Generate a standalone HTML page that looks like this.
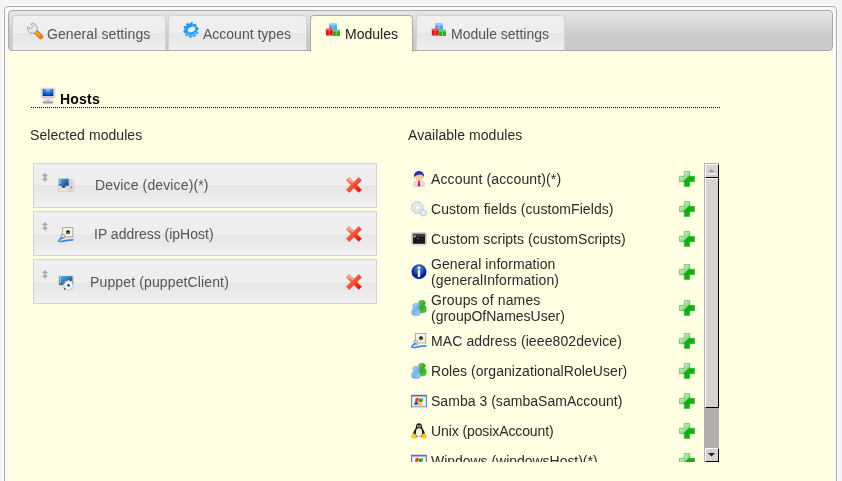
<!DOCTYPE html>
<html><head><meta charset="utf-8">
<style>
html,body{margin:0;padding:0;}
body{width:842px;height:481px;overflow:hidden;position:relative;background:#f4f4f4;font-family:"Liberation Sans",sans-serif;font-size:14px;}
#wrap{position:absolute;left:0;top:0;width:842px;height:481px;will-change:transform;}
.a{position:absolute;}
#outer{left:4px;top:6px;width:831px;height:500px;border:1px solid #aaa;border-radius:4px;background:#fafafa;box-shadow:0 0 0 1px rgba(255,255,255,0.85);}
#content{left:8px;top:51px;width:825px;height:440px;background:#fffde2;}
#bar{left:8px;top:10px;width:823px;height:39px;border:1px solid #aaa;border-radius:4px;background:linear-gradient(#e6e6e6 0,#d6d6d6 14px,#cacaca 26px,#c9c9c9 39px);}
.tab{top:15px;height:34px;border:1px solid #d3d3d3;border-bottom:0;border-radius:4px 4px 0 0;
 background:linear-gradient(#efefef 0,#eeeeee 17px,#e6e6e6 17px,#e9e9e9 25px,#efefef 34px);color:#555;}
.tab.act{height:36px;border-color:#aaa;background:#fffde2;color:#212121;}
.tl{position:absolute;top:10px;line-height:16px;white-space:nowrap;}
.ic{position:absolute;width:16px;height:16px;overflow:visible;}
#h{left:31px;top:91px;width:690px;height:16px;}
#dots{left:31px;top:107px;width:690px;height:1px;background:linear-gradient(to right,#000 50%,transparent 50%) 0 0/2px 1px repeat-x;}
.ht{position:absolute;left:29px;top:0;font-weight:bold;color:#000;line-height:16px;letter-spacing:0.2px;}
.lbl{color:#2a2a2a;line-height:16px;}
.box{left:33px;width:342px;height:43px;border:1px solid #d3d3d3;
 background:linear-gradient(#efefef 0,#eeeeee 21px,#e6e6e6 21px,#e9e9e9 30px,#f1f1f1 43px);color:#555;}
.bt{position:absolute;top:13px;line-height:16px;white-space:nowrap;}
#list{left:408px;top:163px;width:312px;height:299px;overflow:hidden;}
.row{position:absolute;left:0;width:296px;color:#2a2a2a;}
.rt{position:absolute;left:23px;line-height:16px;white-space:nowrap;}
#sb{left:704px;top:163px;width:15px;height:299px;background:#b5afab;}
.sbtn{position:absolute;left:1px;width:12px;height:12px;background:#d6d2ce;border-top:1px solid #fff;border-left:1px solid #fff;border-right:1px solid #000;border-bottom:1px solid #000;}
</style></head>
<body>
<div id="wrap">

<svg width="0" height="0" style="position:absolute">
<defs>
 <linearGradient id="gPlus" x1="0" y1="0" x2="1" y2="1"><stop offset="0" stop-color="#e4f8e0"/><stop offset="0.42" stop-color="#98dc90"/><stop offset="0.5" stop-color="#14a814"/><stop offset="1" stop-color="#04c404"/></linearGradient>
 <linearGradient id="gX" x1="0" y1="0" x2="1" y2="1"><stop offset="0" stop-color="#ffb0a0"/><stop offset="0.45" stop-color="#f45a3a"/><stop offset="1" stop-color="#e80000"/></linearGradient>
 <linearGradient id="gX2" gradientUnits="userSpaceOnUse" x1="2" y1="2" x2="14" y2="14"><stop offset="0" stop-color="#ff9c84"/><stop offset="0.45" stop-color="#f85838"/><stop offset="1" stop-color="#ea0a0a"/></linearGradient>
 <linearGradient id="gScreen" x1="0" y1="0" x2="0" y2="1"><stop offset="0" stop-color="#80c0f4"/><stop offset="0.5" stop-color="#2a70d8"/><stop offset="1" stop-color="#0a3cb0"/></linearGradient>
 <radialGradient id="gHost" cx="0.5" cy="0.1" r="0.8"><stop offset="0" stop-color="#9cd0f8"/><stop offset="0.5" stop-color="#2a74d8"/><stop offset="1" stop-color="#0838a8"/></radialGradient>
 <linearGradient id="gScreen2" x1="0" y1="0" x2="1" y2="1"><stop offset="0" stop-color="#58b0e0"/><stop offset="1" stop-color="#103c88"/></linearGradient>
 <radialGradient id="gInfo" cx="0.5" cy="0.3" r="0.7"><stop offset="0" stop-color="#7090e0"/><stop offset="0.55" stop-color="#1838b0"/><stop offset="0.8" stop-color="#08187a"/><stop offset="1" stop-color="#3060d0"/></radialGradient>
 <linearGradient id="gBlueP" x1="0" y1="0" x2="1" y2="1"><stop offset="0" stop-color="#c0e0fc"/><stop offset="0.5" stop-color="#78b4ec"/><stop offset="1" stop-color="#a8d0f8"/></linearGradient>
 <linearGradient id="gGreenP" x1="0" y1="0" x2="1" y2="1"><stop offset="0" stop-color="#70d860"/><stop offset="0.5" stop-color="#30b020"/><stop offset="1" stop-color="#58d040"/></linearGradient>
 <symbol id="iPlus" viewBox="0 0 16 16"><path d="M5.3 0.4h5.4v4.9h4.9v5.4h-4.9v4.9h-5.4v-4.9h-4.9v-5.4h4.9z" fill="url(#gPlus)" stroke="#30a030" stroke-width="0.5"/></symbol>
 <symbol id="iX" viewBox="0 0 16 16"><path d="M3.26 0.43 L8.00 5.17 L12.74 0.43 L15.57 3.26 L10.83 8.00 L15.57 12.74 L12.74 15.57 L8.00 10.83 L3.26 15.57 L0.43 12.74 L5.17 8.00 L0.43 3.26z" fill="url(#gX2)" stroke="#e03818" stroke-width="0.5" stroke-linejoin="round"/><path d="M3.3 1.6L7 5.3" stroke="#ffd0c0" stroke-width="1.2" stroke-linecap="round" opacity="0.8"/></symbol>
 <symbol id="iWin" viewBox="0 0 16 16"><rect x="0.5" y="2.2" width="15" height="11.6" fill="#f8f8fc" stroke="#6878a8" stroke-width="0.9"/><rect x="0.5" y="2.2" width="15" height="1.5" fill="#5868a0"/><rect x="1.4" y="3.8" width="13.2" height="9.1" fill="none" stroke="#c8d4ec" stroke-width="0.6"/><path d="M4.6 5.2c1.1-.7 2.3-.7 3.4 0l-.6 3.3c-1.1-.6-2.3-.6-3.4 0z" fill="#f04418"/><path d="M8.3 5.3c1.1.6 2.3.6 3.9-.2l-.7 3.4c-1.5.7-2.7.7-3.8 0z" fill="#28a828"/><path d="M3.8 8.8c1.1-.7 2.3-.7 3.4 0l-.6 3.3c-1.1-.6-2.3-.6-3.4 0z" fill="#1c50e8"/><path d="M7.5 8.9c1.1.6 2.3.6 3.9-.2l-.7 3.4c-1.5.7-2.7.7-3.8 0z" fill="#f8d008"/></symbol>
 <symbol id="iGroup" viewBox="0 0 16 16"><path d="M11 0.2c1.9 0 3.3 1 3.3 2.5c0 1-.6 1.8-1.4 2.3c1.5.5 2.2 1.6 2.2 3.2v2.6c0 1.2-1.6 2-4.1 2s-4.1-.8-4.1-2v-2.6c0-1.6.7-2.7 2.2-3.2c-.8-.5-1.4-1.3-1.4-2.3c0-1.5 1.4-2.5 3.3-2.5z" fill="url(#gGreenP)" stroke="#1a8a10" stroke-width="0.5"/><path d="M5 3.2c2 0 3.4 1.1 3.4 2.7c0 1-.6 1.9-1.5 2.4c1.6.5 2.4 1.7 2.4 3.4v2c0 1.2-1.8 1.9-4.3 1.9s-4.3-.7-4.3-1.9v-2c0-1.7.8-2.9 2.4-3.4c-.9-.5-1.5-1.4-1.5-2.4c0-1.6 1.4-2.7 3.4-2.7z" fill="url(#gBlueP)" stroke="#6898d8" stroke-width="0.5"/></symbol>
 <symbol id="iNet" viewBox="0 0 16 16"><rect x="4.6" y="0.5" width="10.2" height="9.4" fill="#f2f2f2" stroke="#9a9a9a" stroke-width="0.8"/><circle cx="10" cy="5.2" r="2" fill="#1a1a1a"/><rect x="8" y="5.3" width="4" height="1.6" fill="#8a7a10"/><path d="M3 7.6h3.6l.4 3.8h-4.4z" fill="#dcdcdc" stroke="#8a8a8a" stroke-width="0.6"/><path d="M4.6 10.6c-2.5 1-4.5 2.8-3.3 3.7c2 1 6-1 10-1.2c1.5 0 2.8-.2 3.5-.3" fill="none" stroke="#4a82d4" stroke-width="1.7" stroke-linecap="round"/></symbol>
 <symbol id="iArr" viewBox="0 0 8 10"><path d="M4 0L7.4 3.3H5V5.5H7.4L4 8.8L0.6 5.5H3V3.3H0.6z" fill="#aeaeae"/></symbol>
 <symbol id="iCubes" viewBox="0 0 16 16"><rect x="4" y="1.5" width="8" height="6.5" rx="0.6" fill="#52a8f4"/><rect x="4" y="1.5" width="8" height="2" rx="0.6" fill="#90ccf8"/><rect x="0.8" y="6.8" width="7" height="6.8" rx="0.6" fill="#e01414"/><rect x="0.8" y="6.8" width="7" height="1.8" rx="0.6" fill="#f06060"/><rect x="7.8" y="7.8" width="7.2" height="6.3" rx="0.6" fill="#22b422"/><rect x="7.8" y="7.8" width="7.2" height="1.8" rx="0.6" fill="#6cd86c"/><path d="M8 2.5v5M4.3 8v5.3M11.4 9v4.8" stroke="#f0f4f4" stroke-width="0.5" opacity="0.7"/></symbol>
</defs>
</svg>
<div id="outer" class="a"></div>
<div id="content" class="a"></div>
<div id="bar" class="a"></div>
<div class="a tab" style="left:12px;width:152px;"><svg class="ic" style="left:14px;top:7px" viewBox="0 0 16 16"><path d="M8.6 8.6L13.9 13.9" stroke="#b85400" stroke-width="4.4" stroke-linecap="round"/><path d="M8.6 8.6L13.9 13.9" stroke="#ffa418" stroke-width="3" stroke-linecap="round"/><circle cx="13.4" cy="13.4" r="1.1" fill="#ff6800"/><path d="M0.9 3.6L3.4 6.1L6.1 3.4L3.6 0.9A4.9 4.9 0 1 1 0.9 3.6z" fill="#e6e6f0" stroke="#8a8aaa" stroke-width="0.8"/></svg><span class="tl" style="left:34px;"><span style="letter-spacing:0.09px">General settings</span></span></div>
<div class="a tab" style="left:168px;width:137px;"><svg class="ic" style="left:14px;top:6px" viewBox="0 0 16 16"><path d="M13.88 9.19 L15.08 10.15 L14.44 11.64 L12.92 11.43 L12.06 12.42 L12.47 13.90 L11.07 14.73 L9.97 13.67 L8.68 13.96 L8.15 15.40 L6.53 15.25 L6.26 13.74 L5.05 13.22 L3.77 14.07 L2.55 13.00 L3.22 11.62 L2.54 10.49 L1.01 10.43 L0.65 8.84 L2.00 8.12 L2.12 6.81 L0.92 5.85 L1.56 4.36 L3.08 4.57 L3.94 3.58 L3.53 2.10 L4.93 1.27 L6.03 2.33 L7.32 2.04 L7.85 0.60 L9.47 0.75 L9.74 2.26 L10.95 2.78 L12.23 1.93 L13.45 3.00 L12.78 4.38 L13.46 5.51 L14.99 5.57 L15.35 7.16 L14.00 7.88z" fill="#1c8ef2" stroke="#1c8ef2" stroke-width="0.6" stroke-linejoin="round"/><circle cx="8" cy="8" r="5.8" fill="#2a9cf6"/><path d="M3.5 11.5A5.8 5.8 0 0 0 13.5 9" stroke="#60c8fc" stroke-width="1.2" fill="none"/><ellipse cx="8.6" cy="7.5" rx="3.9" ry="2.5" transform="rotate(-22 8.6 7.5)" fill="#d8ecfa"/><ellipse cx="8.4" cy="7.7" rx="3.3" ry="2" transform="rotate(-22 8.4 7.7)" fill="#f0f2f4"/></svg><span class="tl" style="left:34px;">Account types</span></div>
<div class="a tab act" style="left:310px;width:101px;"><svg class="ic" style="left:14px;top:6px" viewBox="0 0 16 16"><use href="#iCubes"/></svg><span class="tl" style="left:34px;">Modules</span></div>
<div class="a tab" style="left:416px;width:147px;"><svg class="ic" style="left:14px;top:6px" viewBox="0 0 16 16"><use href="#iCubes"/></svg><span class="tl" style="left:34px;">Module settings</span></div>
<div id="h" class="a"><svg class="ic" style="left:9px;top:-3px" viewBox="0 0 16 16"><rect x="1.2" y="0.2" width="13.6" height="9.2" rx="0.6" fill="#f0f0f0" stroke="#b4b4b4" stroke-width="0.6"/><rect x="2.6" y="1" width="10.8" height="7.2" fill="url(#gHost)"/><path d="M3.6 9.6h8.8l-.4 2.4h-8z" fill="#e8e8e8" stroke="#c0c0c0" stroke-width="0.5"/><rect x="6.8" y="12" width="2.4" height="1" fill="#b0b0b0"/><rect x="3" y="13" width="10" height="2.4" rx="0.6" fill="#9a9a9a"/><rect x="3.5" y="13.2" width="9" height="0.8" fill="#c8c8c8"/></svg><span class="ht">Hosts</span></div>
<div id="dots" class="a"></div>
<div class="a lbl" style="left:30px;top:127px;"><span style="letter-spacing:0.06px">Selected modules</span></div>
<div class="a lbl" style="left:408px;top:127px;"><span style="letter-spacing:0.06px">Available modules</span></div>
<div class="a box" style="top:163px;"><svg class="ic" style="left:7px;top:9px;width:8px;height:10px" viewBox="0 0 8 10"><use href="#iArr"/></svg><svg class="ic" style="left:24px;top:13px" viewBox="0 0 16 16"><rect x="0.2" y="1" width="11.2" height="8.3" fill="#efebe2" stroke="#d0ccc4" stroke-width="0.4"/><rect x="0.7" y="1.8" width="10" height="7" fill="url(#gScreen2)"/><rect x="1.5" y="3.3" width="1.4" height="1" fill="#e8f0f8"/><rect x="1.5" y="5.6" width="1.4" height="1" fill="#e8f0f8"/><ellipse cx="5.6" cy="10" rx="2" ry="0.9" fill="#111"/><rect x="0" y="10.8" width="11.4" height="4" fill="#e2e2e2" stroke="#c4c4c4" stroke-width="0.4"/><rect x="11.6" y="2.8" width="4" height="11.6" fill="#e6e6e6" stroke="#b0b0b0" stroke-width="0.4"/><rect x="12.6" y="3.5" width="1.2" height="10" fill="#c8c8c8"/><rect x="13.2" y="9.6" width="1" height="1.8" fill="#4a80d0"/></svg><span class="bt" style="left:61px;top:13px"><span style="letter-spacing:0.13px">Device (device)(*)</span></span><svg class="ic" style="left:312px;top:13px" viewBox="0 0 16 16"><use href="#iX"/></svg></div>
<div class="a box" style="top:211px;background:linear-gradient(#efefef 0,#eeeeee 22px,#e6e6e6 22px,#e9e9e9 31px,#f1f1f1 43px);"><svg class="ic" style="left:7px;top:10px;width:8px;height:10px" viewBox="0 0 8 10"><use href="#iArr"/></svg><svg class="ic" style="left:24px;top:15px" viewBox="0 0 16 16"><use href="#iNet"/></svg><span class="bt" style="left:60px;top:14px">IP address (ipHost)</span><svg class="ic" style="left:312px;top:14px" viewBox="0 0 16 16"><use href="#iX"/></svg></div>
<div class="a box" style="top:259px;background:linear-gradient(#efefef 0,#eeeeee 22px,#e6e6e6 22px,#e9e9e9 31px,#f1f1f1 43px);"><svg class="ic" style="left:7px;top:10px;width:8px;height:10px" viewBox="0 0 8 10"><use href="#iArr"/></svg><svg class="ic" style="left:24px;top:15px" viewBox="0 0 16 16"><rect x="0.2" y="0.3" width="15.2" height="10.6" fill="#f0ede4" stroke="#d8d4cc" stroke-width="0.4"/><rect x="1" y="1.1" width="13.6" height="9" fill="url(#gScreen2)"/><rect x="1.8" y="2.3" width="1" height="1" fill="#fff"/><rect x="1.8" y="4.5" width="1" height="1" fill="#fff"/><rect x="1.8" y="6.7" width="1" height="1" fill="#fff"/><path d="M14.51 11.44 L15.28 12.25 L14.64 13.34 L13.56 13.07 L12.78 13.73 L12.85 14.84 L11.65 15.27 L11.00 14.37 L9.97 14.37 L9.31 15.26 L8.12 14.83 L8.20 13.71 L7.42 13.05 L6.34 13.32 L5.71 12.22 L6.48 11.41 L6.31 10.41 L5.31 9.91 L5.53 8.66 L6.64 8.55 L7.15 7.66 L6.71 6.64 L7.68 5.83 L8.61 6.45 L9.57 6.10 L9.88 5.04 L11.15 5.04 L11.46 6.11 L12.42 6.46 L13.35 5.85 L14.31 6.67 L13.86 7.68 L14.37 8.57 L15.48 8.70 L15.69 9.94 L14.69 10.43z" fill="#f4f4f4" stroke="#9c9c9c" stroke-width="0.5"/><circle cx="10.5" cy="10.2" r="1.5" fill="#2858a8"/><path d="M5.8 12.5l2 1.5l-1.5 1z" fill="#333"/></svg><span class="bt" style="left:56px;top:14px"><span style="letter-spacing:0.13px">Puppet (puppetClient)</span></span><svg class="ic" style="left:312px;top:14px" viewBox="0 0 16 16"><use href="#iX"/></svg></div>
<div id="list" class="a">
<div class="row" style="top:1px;height:30px;"><svg class="ic" style="left:3px;top:7px" viewBox="0 0 16 16"><path d="M2.6 15.6v-3c0-2 2-3.2 5.4-3.2s5.4 1.2 5.4 3.2v3z" fill="#dcdff0" stroke="#b0b4c8" stroke-width="0.4"/><path d="M7.3 9.5h1.4l.6 5.8h-2.6z" fill="#e41c1c"/><circle cx="8" cy="5" r="4.5" fill="#f6caa0"/><path d="M3.1 6.2C2.6 2.2 4.8 0 8 0s5.5 2.2 4.9 6.2c-.5-1.6-1.8-2.8-3.8-2.8c-2.2 0-4.5.8-6 2.8z" fill="#2838a8"/></svg><span class="rt" style="top:7px;"><span style="letter-spacing:0.13px">Account (account)(*)</span></span><svg class="ic" style="left:271px;top:7px" viewBox="0 0 16 16"><use href="#iPlus"/></svg></div>
<div class="row" style="top:31px;height:30px;"><svg class="ic" style="left:3px;top:7px" viewBox="0 0 16 16"><path d="M11.28 7.00 L12.40 7.60 L12.10 8.69 L10.82 8.63 L10.36 9.42 L11.03 10.50 L10.22 11.30 L9.15 10.61 L8.36 11.06 L8.40 12.33 L7.30 12.62 L6.72 11.48 L5.80 11.48 L5.20 12.60 L4.11 12.30 L4.17 11.02 L3.38 10.56 L2.30 11.23 L1.50 10.42 L2.19 9.35 L1.74 8.56 L0.47 8.60 L0.18 7.50 L1.32 6.92 L1.32 6.00 L0.20 5.40 L0.50 4.31 L1.78 4.37 L2.24 3.58 L1.57 2.50 L2.38 1.70 L3.45 2.39 L4.24 1.94 L4.20 0.67 L5.30 0.38 L5.88 1.52 L6.80 1.52 L7.40 0.40 L8.49 0.70 L8.43 1.98 L9.22 2.44 L10.30 1.77 L11.10 2.58 L10.41 3.65 L10.86 4.44 L12.13 4.40 L12.42 5.50 L11.28 6.08z" fill="#e4ecf4" stroke="#a4b4c8" stroke-width="0.6"/><circle cx="6.3" cy="6.5" r="2.4" fill="#fffde2" stroke="#b4c4d4" stroke-width="0.6"/><path d="M14.88 12.57 L15.51 13.18 L15.02 13.97 L14.19 13.68 L13.61 14.10 L13.62 14.97 L12.71 15.19 L12.33 14.40 L11.63 14.28 L11.02 14.91 L10.23 14.42 L10.52 13.59 L10.10 13.01 L9.23 13.02 L9.01 12.11 L9.80 11.73 L9.92 11.03 L9.29 10.42 L9.78 9.63 L10.61 9.92 L11.19 9.50 L11.18 8.63 L12.09 8.41 L12.47 9.20 L13.17 9.32 L13.78 8.69 L14.57 9.18 L14.28 10.01 L14.70 10.59 L15.57 10.58 L15.79 11.49 L15.00 11.87z" fill="#e0e8f2" stroke="#a0b0c8" stroke-width="0.5"/><circle cx="12.4" cy="11.8" r="1.1" fill="#fffde2"/></svg><span class="rt" style="top:7px;"><span style="letter-spacing:0.075px">Custom fields (customFields)</span></span><svg class="ic" style="left:271px;top:7px" viewBox="0 0 16 16"><use href="#iPlus"/></svg></div>
<div class="row" style="top:61px;height:30px;"><svg class="ic" style="left:3px;top:7px" viewBox="0 0 16 16"><rect x="0.5" y="1.5" width="15" height="12.6" rx="1" fill="#ececec" stroke="#c0c0c0" stroke-width="0.6"/><rect x="1.8" y="2.8" width="12.4" height="10" fill="#181818"/><rect x="1.8" y="2.8" width="12.4" height="3" fill="#3a3a3a"/><path d="M2.5 4l2 1.3l-2 1.3" stroke="#e8e8e8" stroke-width="0.8" fill="none"/><rect x="6" y="7" width="2" height="0.8" fill="#777"/></svg><span class="rt" style="top:7px;"><span style="letter-spacing:0.035px">Custom scripts (customScripts)</span></span><svg class="ic" style="left:271px;top:7px" viewBox="0 0 16 16"><use href="#iPlus"/></svg></div>
<div class="row" style="top:91px;height:36px;"><svg class="ic" style="left:3px;top:10px" viewBox="0 0 16 16"><circle cx="8" cy="7.8" r="7.5" fill="url(#gInfo)"/><rect x="6.8" y="6.3" width="2.4" height="6.6" fill="#fff"/><circle cx="8" cy="3.9" r="1.3" fill="#fff"/></svg><span class="rt" style="top:2px;"><span style="letter-spacing:0.08px">General information</span><br><span style="letter-spacing:0.1px">(generalInformation)</span></span><svg class="ic" style="left:271px;top:10px" viewBox="0 0 16 16"><use href="#iPlus"/></svg></div>
<div class="row" style="top:127px;height:36px;"><svg class="ic" style="left:3px;top:10px" viewBox="0 0 16 16"><use href="#iGroup"/></svg><span class="rt" style="top:2px;"><span style="letter-spacing:0.14px">Groups of names</span><br>(groupOfNamesUser)</span><svg class="ic" style="left:271px;top:10px" viewBox="0 0 16 16"><use href="#iPlus"/></svg></div>
<div class="row" style="top:163px;height:30px;"><svg class="ic" style="left:3px;top:7px" viewBox="0 0 16 16"><use href="#iNet"/></svg><span class="rt" style="top:7px;"><span style="letter-spacing:0.1px">MAC address (ieee802device)</span></span><svg class="ic" style="left:271px;top:7px" viewBox="0 0 16 16"><use href="#iPlus"/></svg></div>
<div class="row" style="top:193px;height:30px;"><svg class="ic" style="left:3px;top:7px" viewBox="0 0 16 16"><use href="#iGroup"/></svg><span class="rt" style="top:7px;"><span style="letter-spacing:0.06px">Roles (organizationalRoleUser)</span></span><svg class="ic" style="left:271px;top:7px" viewBox="0 0 16 16"><use href="#iPlus"/></svg></div>
<div class="row" style="top:223px;height:30px;"><svg class="ic" style="left:3px;top:7px" viewBox="0 0 16 16"><use href="#iWin"/></svg><span class="rt" style="top:7px;"><span style="letter-spacing:0.03px">Samba 3 (sambaSamAccount)</span></span><svg class="ic" style="left:271px;top:7px" viewBox="0 0 16 16"><use href="#iPlus"/></svg></div>
<div class="row" style="top:253px;height:30px;"><svg class="ic" style="left:3px;top:7px" viewBox="0 0 16 16"><path d="M8 0.2c-2.3 0-3.1 1.9-3.1 3.7c0 1.5-1.9 3-2.5 5.5c-.4 2.2.4 3.8 2 4.4h7.2c1.6-.6 2.4-2.2 2-4.4c-.6-2.5-2.5-4-2.5-5.5c0-1.8-.8-3.7-3.1-3.7z" fill="#161616"/><ellipse cx="8" cy="9.6" rx="3.1" ry="4.3" fill="#f4f4f4"/><ellipse cx="6.9" cy="3.1" rx="0.8" ry="1" fill="#d8d8d8"/><ellipse cx="9.1" cy="3.1" rx="0.8" ry="1" fill="#d8d8d8"/><path d="M6 4.8h4l-2 1.6z" fill="#f4b800"/><path d="M0.6 12.2c.8-1 2.4-1.6 3.6-1.4l1.9 3.5c-1 .8-3 1.2-4.6.9c-.8-.6-1.2-1.8-.9-3z" fill="#f8d414" stroke="#d0a800" stroke-width="0.4"/><path d="M15.4 12.2c-.8-1-2.4-1.6-3.6-1.4l-1.9 3.5c1 .8 3 1.2 4.6.9c.8-.6 1.2-1.8.9-3z" fill="#f8d414" stroke="#d0a800" stroke-width="0.4"/></svg><span class="rt" style="top:7px;"><span style="letter-spacing:-0.1px">Unix (posixAccount)</span></span><svg class="ic" style="left:271px;top:7px" viewBox="0 0 16 16"><use href="#iPlus"/></svg></div>
<div class="row" style="top:283px;height:30px;"><svg class="ic" style="left:3px;top:7px" viewBox="0 0 16 16"><use href="#iWin"/></svg><span class="rt" style="top:7px;"><span style="letter-spacing:-0.03px">Windows (windowsHost)(*)</span></span><svg class="ic" style="left:271px;top:7px" viewBox="0 0 16 16"><use href="#iPlus"/></svg></div>
</div>
<div id="sb" class="a">
 <div class="sbtn" style="top:1px;"><svg style="position:absolute;left:1px;top:3px" width="9" height="7" viewBox="0 0 9 7"><path d="M1 4.5L4.5 1L8 4.5z" fill="#a49e9a"/><path d="M1.5 5.5H8.5" stroke="#fff" stroke-width="1"/></svg></div>
 <div class="sbtn" style="top:15px;height:228px;"></div>
 <div class="sbtn" style="top:285px;"><svg style="position:absolute;left:1px;top:3px" width="9" height="6" viewBox="0 0 9 6"><path d="M1 1H8L4.5 4.5z" fill="#222"/></svg></div>
</div>
</div>
</body></html>
